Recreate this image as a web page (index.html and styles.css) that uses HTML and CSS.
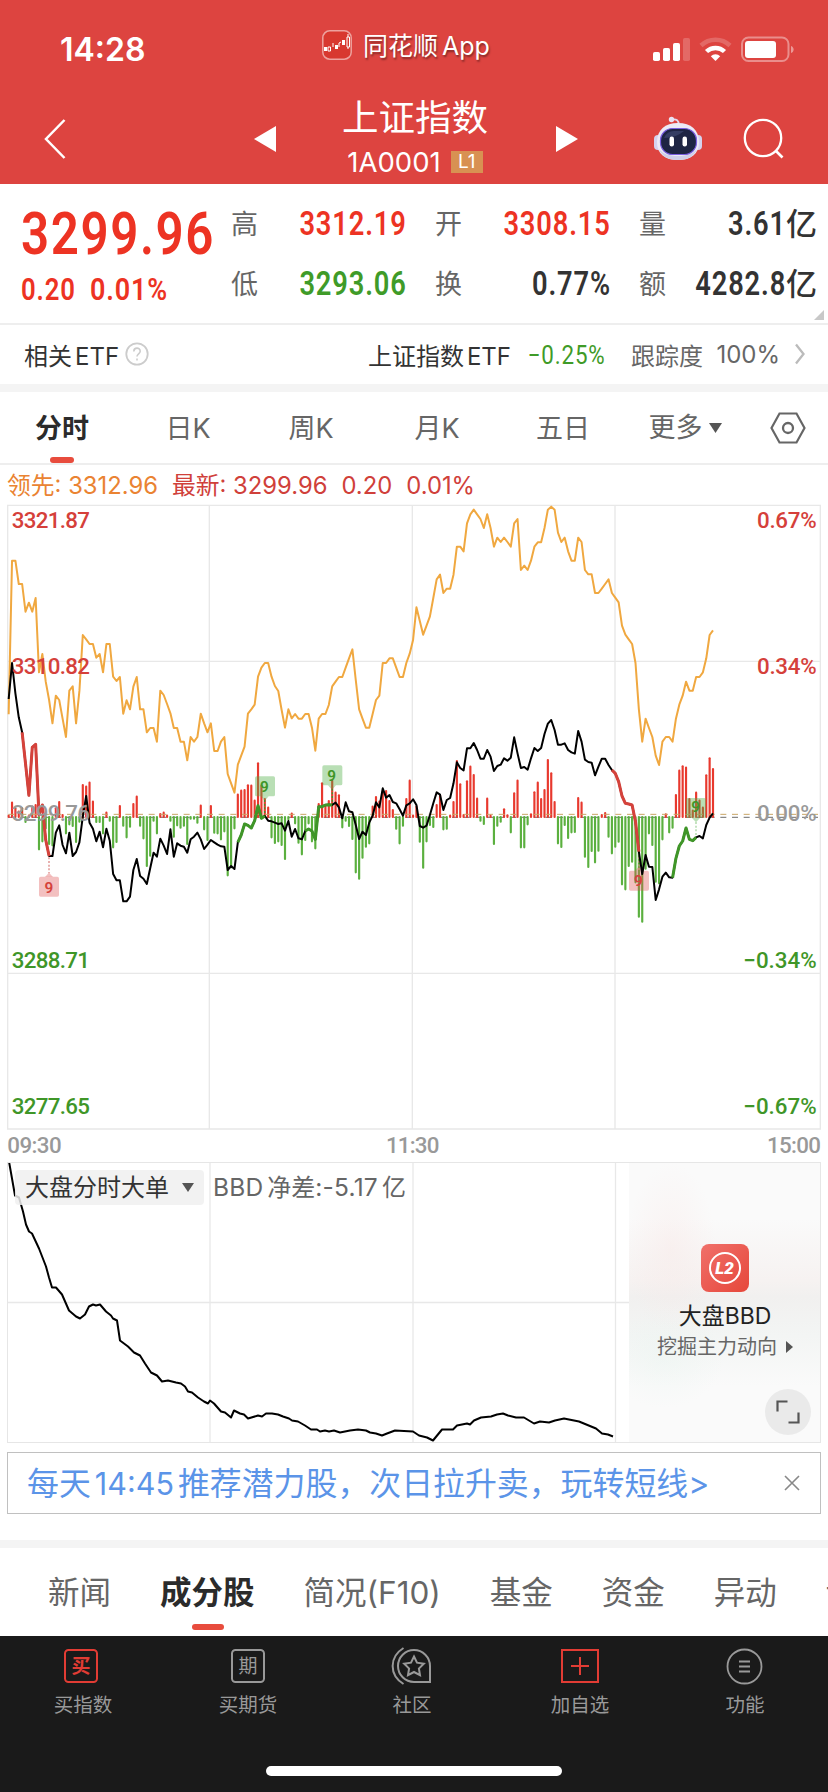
FILE: index.html
```html
<!DOCTYPE html>
<html lang="zh-CN">
<head>
  <meta charset="UTF-8" />
  <title>上证指数</title>
  <link rel="stylesheet" href="styles.css">
</head>
<body>

  <header class="header">
    <div class="status-bar">
      <span class="clock">14:28</span>
      <div class="app-mark">
        <svg width="30" height="30" viewBox="0 0 30 30">
          <rect x="0.8" y="0.8" width="28.4" height="28.4" rx="7" fill="#d8382f" stroke="#eda29e" stroke-width="1.5"/>
          <path d="M2 17h3v4H2zM13 15h3v4h-3zM20 10h3v5h-3z" fill="#fff"/>
          <path d="M6 17h2.500v4H6zM25 7h2.500v10h-2.500zM11 13v4M17 17v-4l2-1M26 4v3M26 17v2" fill="none" stroke="#fff"/>
        </svg>
        <span>同花顺<i>App</i></span>
      </div>
      <svg class="status-icons" width="144" height="28" viewBox="0 0 144 28">
        <g fill="#fff">
          <rect x="0" y="16" width="7" height="9" rx="1.800"/>
          <rect x="10" y="12" width="7" height="13" rx="1.800"/>
          <rect x="20" y="7" width="7" height="18" rx="1.800"/>
          <rect x="30" y="2" width="7" height="23" rx="1.800" opacity="0.2"/>
          <path d="M62.500 25l-4.700-4.800a6.800 6.800 0 0 1 9.400 0z"/>
          <rect x="92" y="5" width="31" height="17" rx="3"/>
          <path d="M138 10c3.500 1 3.500 6 0 7z" opacity="0.45"/>
        </g>
        <path d="M53.500 15.500a13 13 0 0 1 18 0" fill="none" stroke="#fff" stroke-width="4.500"/>
        <path d="M48 9.500a21 21 0 0 1 29 0" fill="none" stroke="#fff" stroke-width="4.500" opacity="0.2"/>
        <rect x="89" y="1.500" width="46.500" height="23.500" rx="6.500" fill="none" stroke="#fff" stroke-width="2" opacity="0.4"/>
      </svg>
    </div>

    <div class="title-bar">
      <svg class="back" width="24" height="42" viewBox="0 0 24 42"><path d="M21.500 2L3 21l18.500 19" fill="none" stroke="#fff" stroke-width="2.500"/></svg>
      <svg class="prev" width="22" height="26" viewBox="0 0 22 26"><path d="M22 0v26L0 13z" fill="#fff"/></svg>
      <div class="title">
        <h1>上证指数</h1>
        <div class="code"><span>1A0001</span><b>L1</b></div>
      </div>
      <svg class="next" width="22" height="26" viewBox="0 0 22 26"><path d="M0 0v26L22 13z" fill="#fff"/></svg>
      <svg class="robot" width="48" height="45" viewBox="0 0 48 45">
        <path d="M18 3.500q7-1 6.500 5" fill="none" stroke="#e3d9ee" stroke-width="1.800"/>
        <circle cx="17.500" cy="3.500" r="2.700" fill="#e9e2f2"/>
        <rect x="0" y="19" width="8" height="15" rx="4" fill="#d5d2ee"/>
        <rect x="40" y="19" width="8" height="15" rx="4" fill="#d5d2ee"/>
        <path d="M24 7C11 7 3 14 3 26s8 18 21 18 21-6 21-18S37 7 24 7z" fill="#eceaf6"/>
        <path d="M5 33c3 8 10 11 19 11s16-3 19-11c-4 5-10 7-19 7s-15-2-19-7z" fill="#cfcfe9"/>
        <rect x="6.500" y="12.500" width="36" height="26" rx="12" fill="#1e2544" stroke="#7a5fe0" stroke-width="1.200"/>
        <path d="M10 22q3-7 10-7h10q-8 7-20 7z" fill="#343d63"/>
        <rect x="15.500" y="20.500" width="4.500" height="10" rx="2.200" fill="#fff"/>
        <rect x="28.500" y="20.500" width="4.500" height="10" rx="2.200" fill="#fff"/>
      </svg>
      <svg class="search" width="42" height="42" viewBox="0 0 42 42"><circle cx="20" cy="20" r="18.200" fill="none" stroke="#fff" stroke-width="2.300"/><path d="M32.500 32.500l7 7" stroke="#fff" stroke-width="2.700"/></svg>
    </div>
  </header>

  <section class="quote">
    <div class="price">
      <div class="last"><span class="num">3299.96</span></div>
      <div class="change"><span class="num">0.20</span><span class="num">0.01%</span></div>
    </div>
    <div class="stats">
      <span class="key">高</span><span class="val up"><span class="num">3312.19</span></span>
      <span class="key">开</span><span class="val up"><span class="num">3308.15</span></span>
      <span class="key">量</span><span class="val with-unit"><span class="num">3.61</span>亿</span>
      <span class="key">低</span><span class="val down"><span class="num">3293.06</span></span>
      <span class="key">换</span><span class="val"><span class="num">0.77%</span></span>
      <span class="key">额</span><span class="val with-unit"><span class="num">4282.8</span>亿</span>
    </div>
    <div class="corner"></div>
  </section>

  <section class="etf">
    <span>相关<i>ETF</i></span>
    <svg class="help" width="24" height="24" viewBox="0 0 24 24">
      <circle cx="12" cy="12" r="10.700" fill="none" stroke="#ccc" stroke-width="1.800"/>
      <path d="M8.800 9.500c0-4.500 6.400-4.300 6.400-.3 0 2.500-3.200 2.800-3.200 5.300M12 16.500v2" fill="none" stroke="#ccc" stroke-width="1.600"/>
    </svg>
    <span class="etf-name">上证指数<i>ETF</i></span>
    <span class="etf-change"><span class="num">−0.25%</span></span>
    <span class="track">跟踪度</span>
    <span class="track-val">100%</span>
    <svg width="12" height="22" viewBox="0 0 12 22"><path d="M2 1.500l7.500 9.500L2 20.500" fill="none" stroke="#bbb" stroke-width="2.300"/></svg>
  </section>

  <nav class="periods">
    <span class="active">分时</span>
    <span>日K</span>
    <span>周K</span>
    <span>月K</span>
    <span>五日</span>
    <span class="more">更多<svg width="13" height="10" viewBox="0 0 13 10"><path d="M0 0h13L6.500 10z" fill="#555"/></svg></span>
    <span class="gear"><svg width="36" height="32" viewBox="0 0 36 32"><path d="M9.500 1.500h17L34.500 16l-8 14.500h-17L1.500 16z" fill="none" stroke="#666" stroke-width="2.200"/><circle cx="18" cy="16" r="5" fill="none" stroke="#666" stroke-width="2.300"/></svg></span>
  </nav>

  <div class="legend">
    <span class="lead">领先: 3312.96</span>
    <span>最新: 3299.96</span>
    <span>0.20</span>
    <span>0.01%</span>
  </div>

  <!-- plot units are thirds of a pixel -->
  <svg class="chart" id="minute-chart" viewBox="0 0 2484 1986">
    <g class="grid">
      <path d="M23 16H2461V1887H23zM23 484H2461M23 1420H2461M628 16V1887M1237 16V1887M1845 16V1887"/>
    </g>
    <path class="zero-line" d="M26 952H2454"/>
    <g id="bars"></g>
    <path class="avg-line" d="M26 943H2454"/>
    <g class="marks">
      <rect class="m-red" x="117" y="1130" width="60" height="60" rx="5"/><path class="m-red" d="M135 1131l12-13 12 13z"/>
      <rect class="m-green" x="765" y="829" width="60" height="60" rx="5"/><path class="m-green" d="M782 889l12 13 12-13z"/>
      <rect class="m-green" x="967" y="796" width="60" height="60" rx="5"/><path class="m-green" d="M984 856l12 13 12-13z"/>
      <rect class="m-red" x="1887" y="1112" width="60" height="60" rx="5"/><path class="m-red" d="M1905 1112l12-13 12 13z"/>
      <rect class="m-green" x="2058" y="894" width="60" height="60" rx="5"/><path class="m-green" d="M2076 954l12 13 12-13z"/>
      <path class="dots red" d="M147 1072V1120M1917 1060V1112"/>
      <path class="dots green" d="M794 900V948M997 866V912"/>
      <path class="dots pale" d="M2088 966V1008"/>
      <g class="nine red"><text x="147" y="1178">9</text><text x="1915" y="1158">9</text></g>
      <g class="nine green"><text x="793" y="877">9</text><text x="995" y="842">9</text><text x="2087" y="936">9</text></g>
    </g>
    <g id="lines"></g>
    <g class="scale">
      <text class="up" x="35" y="83" textLength="235">3321.87</text>
      <text class="up" x="35" y="523" textLength="235">3310.82</text>
      <text class="flat" x="35" y="963" textLength="235">3299.76</text>
      <text class="down" x="35" y="1403" textLength="235">3288.71</text>
      <text class="down" x="35" y="1843" textLength="235">3277.65</text>
      <text class="up" x="2271" y="83" textLength="179">0.67%</text>
      <text class="up" x="2271" y="523" textLength="179">0.34%</text>
      <text class="flat" x="2271" y="963" textLength="179">0.00%</text>
      <text class="down" x="2230" y="1403" textLength="220">−0.34%</text>
      <text class="down" x="2230" y="1843" textLength="220">−0.67%</text>
      <text class="time" x="22" y="1958" textLength="163">09:30</text>
      <text class="time" x="1158" y="1958" textLength="160">11:30</text>
      <text class="time" x="2301" y="1958" textLength="162">15:00</text>
    </g>
  </svg>

  <section class="bbd">
    <div class="bbd-plot">
      <svg width="622" height="279" viewBox="0 0 622 279">
        <path class="bbd-grid" d="M0 139.500H622M202 0V280M405 0V280M607.500 0V280"/>
        <polyline id="bbd-line" fill="none" stroke="#000" stroke-width="2" stroke-linejoin="round"/>
      </svg>
      <div class="bbd-label">
        <span class="pill">大盘分时大单<svg width="12" height="9" viewBox="0 0 12 9"><path d="M0 0h12L6 9z" fill="#555"/></svg></span>
        <span class="bbd-val"><i>BBD</i>净差<i>:-5.17</i>亿</span>
      </div>
    </div>
    <div class="bbd-card">
      <svg width="48" height="48" viewBox="0 0 48 48">
        <defs><linearGradient id="l2" x1="0" y1="0" x2="1" y2="1"><stop offset="0" stop-color="#f0706a"/><stop offset="1" stop-color="#e6473a"/></linearGradient></defs>
        <rect width="48" height="48" rx="8" fill="url(#l2)"/>
        <circle cx="24" cy="24" r="15" fill="none" stroke="#fff" stroke-width="2"/>
        <text x="23.500" y="30" class="l2-text">L2</text>
      </svg>
      <div class="card-name">大盘<i>BBD</i></div>
      <div class="card-sub">挖掘主力动向<svg width="7" height="12" viewBox="0 0 7 12"><path d="M0 0l7 6-7 6z" fill="#555"/></svg></div>
      <div class="expand"><svg width="26" height="26" viewBox="0 0 26 26"><path d="M2.500 12.500v-10h10M23.500 13.500v10h-10" fill="none" stroke="#555" stroke-width="2.200"/></svg></div>
    </div>
  </section>

  <div class="ad">
    <span>每天<i>14:45</i>推荐潜力股，次日拉升卖，玩转短线&gt;</span>
    <svg width="16" height="16" viewBox="0 0 16 16"><path d="M1 1l14 14M15 1L1 15" stroke="#888" stroke-width="1.600"/></svg>
  </div>

  <nav class="info-tabs">
    <span>新闻</span>
    <span class="active">成分股</span>
    <span>简况<i>(F10)</i></span>
    <span>基金</span>
    <span>资金</span>
    <span>异动</span>
    <span>讨论</span>
  </nav>

  <footer class="toolbar">
    <div class="tool">
      <svg width="44" height="40" viewBox="0 0 44 40"><rect x="4" y="3" width="32" height="32" rx="3.500" fill="none" stroke="#e23c34" stroke-width="2"/><text x="20" y="26" class="box-text red">买</text></svg>
      <span>买指数</span>
    </div>
    <div class="tool">
      <svg width="44" height="40" viewBox="0 0 44 40"><rect x="6" y="3" width="32" height="32" rx="3.500" fill="none" stroke="#999" stroke-width="2"/><text x="22" y="26" class="box-text">期</text></svg>
      <span>买期货</span>
    </div>
    <div class="tool">
      <svg width="44" height="40" viewBox="0 0 44 40" fill="none" stroke="#999" stroke-width="2">
        <path d="M24 3a16 16 0 0 0 0 32h16V19A16 16 0 0 0 24 3z"/>
        <path d="M13.500 1C-1 10-1 28 13.500 37"/>
        <path d="M24 9.500l3 6.200 6.800 1-4.900 4.800 1.100 6.700-6-3.200-6 3.200 1.100-6.700-4.900-4.800 6.800-1z"/>
      </svg>
      <span>社区</span>
    </div>
    <div class="tool">
      <svg width="44" height="40" viewBox="0 0 44 40" fill="none" stroke="#e23c34" stroke-width="2"><rect x="4" y="3" width="36" height="32"/><path d="M13 19h18M22 10v18"/></svg>
      <span>加自选</span>
    </div>
    <div class="tool">
      <svg width="44" height="40" viewBox="0 0 44 40" fill="none" stroke="#999" stroke-width="1.800"><circle cx="21.500" cy="19.500" r="17"/><path d="M16 14.500h11M16 19.500h11M16 24.500h11" stroke-width="2"/></svg>
      <span>功能</span>
    </div>
    <div class="home-bar"></div>
  </footer>

  <script src="chart.js"></script>
</body>
</html>
```
FILE: styles.css
```css
* {
  box-sizing: border-box;
  margin: 0;
  padding: 0;
}

body {
  width: 828px;
  height: 1792px;
  overflow: hidden;
  background: #fff;
  color: #333;
  font-family: Inter, "Noto Sans CJK SC", sans-serif;
}

svg {
  display: block;
  flex: none;
}

i {
  font-style: normal;
}

span {
  white-space: nowrap;
}

.num {
  display: inline-block;
  font-family: Roboto, "Noto Sans CJK SC", sans-serif;
  font-weight: 600;
  letter-spacing: 1px;
  transform: scaleX(0.83);
  transform-origin: right center;
}

.up { color: #ed3323; }
.down { color: #3f9b28; }

/* Header */
.header {
  height: 184px;
  background: #dd4440;
  color: #fff;
}

.status-bar {
  display: flex;
  height: 92px;
  padding: 30px 30px 0 60px;
}

.clock {
  width: 262px;
  font-size: 32px;
  font-weight: 600;
  line-height: 40px;
}

.app-mark {
  display: flex;
  width: 331px;
  height: 30px;
}

.app-mark span {
  margin-left: 11px;
  font-size: 25px;
  line-height: 32px;
  text-shadow: 1px 2px 2px rgba(0, 0, 0, 0.4);
}

.app-mark i {
  margin-left: 4px;
}

.status-icons {
  margin-top: 6px;
}

.title-bar {
  display: flex;
  padding-left: 43px;
}

.back { margin-top: 26px; }
.prev { margin: 34px 0 0 187px; }

.title {
  width: 280px;
  padding-right: 2px;
  text-align: center;
}

.title h1 {
  font-size: 36.500px;
  font-weight: 400;
  line-height: 52px;
}

.code {
  display: flex;
  justify-content: center;
  align-items: center;
  height: 36px;
  font-size: 27.500px;
}

.code b {
  width: 32px;
  height: 22px;
  margin-left: 10px;
  background: #d89152;
  font-size: 19px;
  font-weight: 400;
  line-height: 22px;
}

.next { margin: 34px 0 0 0; }
.robot { margin: 24px 0 0 76px; }
.search { margin: 26px 0 0 41px; }

/* Price block */
.quote {
  position: relative;
  display: flex;
  height: 141px;
  padding: 10px 11px 0 21px;
  border-bottom: 2px solid #eee;
}

.price {
  width: 210px;
  color: #ed3323;
}

.price .num {
  transform-origin: left center;
}

.last {
  height: 78px;
  font-size: 60px;
  line-height: 77px;
}

.last .num {
  letter-spacing: 2px;
  transform: scaleX(0.82);
}

.change {
  display: flex;
  margin-top: -1px;
  font-size: 31px;
  line-height: 37px;
}

.change .num:first-child {
  width: 69px;
}

.change .num:last-child {
  transform: scaleX(0.87);
}

.stats {
  flex: 1;
  display: grid;
  grid-template-columns: 30px 146px 58px 146px 58px 148px;
  grid-template-rows: 60px 60px;
  align-items: center;
}

.key {
  padding-bottom: 3px;
  font-size: 27px;
  color: #666;
}

.val + .key {
  padding-left: 28px;
}

.stats .key:nth-child(7) {
  padding-left: 0;
}

.val {
  text-align: right;
  font-size: 31px;
  font-weight: 500;
}

.val .num {
  font-size: 32.500px;
  transform: scaleX(0.84);
}

.with-unit {
  padding-bottom: 5px;
}

.corner {
  position: absolute;
  right: 4px;
  bottom: 3px;
  border-left: 10px solid transparent;
  border-bottom: 10px solid #c8c8c8;
}

.etf {
  display: flex;
  align-items: center;
  height: 67px;
  padding: 0 22px 1px 24px;
  border-bottom: 8px solid #f4f4f4;
  font-size: 24px;
}

.etf i {
  margin-left: 3px;
  font-size: 24px;
}

.help { margin-left: 6px; }
.etf-name { margin-left: auto; }

.etf-change {
  width: 95px;
  text-align: right;
  color: #3f9b28;
  font-size: 26px;
}

.etf-change .num {
  font-weight: 400;
  transform: scaleX(0.86);
}

.track {
  margin-left: 25px;
  color: #666;
}

.track-val {
  width: 77px;
  margin-right: 14px;
  text-align: right;
  color: #666;
  font-size: 24px;
}

/* Period tabs */
.periods {
  display: grid;
  grid-template-columns: 124px 128px 118px 134px 118px 126px 80px;
  height: 73px;
  border-bottom: 2px solid #eee;
  color: #666;
  font-size: 27px;
  line-height: 73px;
}

.periods span {
  height: 71px;
  text-align: center;
}

.periods .active,
.info-tabs .active {
  position: relative;
  color: #2b2b2b;
  font-weight: 700;
}

.periods .active::after,
.info-tabs .active::after {
  content: "";
  position: absolute;
  left: 50px;
  bottom: 0;
  width: 24px;
  height: 6px;
  border-radius: 3px;
  background: #e84c3d;
}

.periods .more {
  display: flex;
  justify-content: center;
  align-items: center;
  gap: 6px;
}

.gear {
  display: flex;
  justify-content: center;
  align-items: center;
}

.legend {
  display: flex;
  height: 35px;
  padding: 3px 0 0 7px;
  gap: 14px;
  color: #d0403a;
  font-size: 23.800px;
  line-height: 35px;
}

.lead {
  color: #ea8332;
}

/* Minute chart */
.chart {
  width: 828px;
  height: 662px;
}

.grid path {
  fill: none;
  stroke: #e8e8e8;
  stroke-width: 4;
}

.zero-line {
  stroke: #888;
  stroke-width: 4;
  stroke-dasharray: 18 17;
}

.avg-line {
  stroke: #c9a565;
  stroke-width: 3;
  stroke-dasharray: 18 17;
}

.bar {
  stroke-width: 6.500;
  stroke-linecap: round;
}

.bar-up { stroke: #e8392e; }
.bar-down { stroke: #5bb03f; }

.line {
  fill: none;
  stroke-linejoin: round;
}

.line-lead {
  stroke: #f0a840;
  stroke-width: 6;
}

.line-index {
  stroke: #000;
  stroke-width: 6;
}

.line-red {
  stroke: #d5423b;
  stroke-width: 9;
}

.line-green {
  stroke: #3f9628;
  stroke-width: 9;
}

.m-red { fill: rgba(222, 80, 80, 0.36); }
.m-green { fill: rgba(80, 175, 70, 0.4); }

.dots {
  stroke-width: 4;
  stroke-dasharray: 6 5;
}

.dots.red { stroke: #dd8a88; }
.dots.green { stroke: #3f9628; }
.dots.pale { stroke: #a9d6a2; }

.nine {
  font-family: Roboto, sans-serif;
  font-size: 46px;
  font-weight: 600;
  text-anchor: middle;
}

.nine.red { fill: #d5423b; }
.nine.green { fill: #3f9628; }

.scale text {
  font-family: Roboto, sans-serif;
  font-size: 67px;
  font-weight: 500;
}

.scale .up { fill: #d5403a; }
.scale .down { fill: #3f9628; }
.scale .flat { fill: #999; }
.scale .time { fill: #999; }

/* Big order chart */
.bbd {
  display: flex;
  width: 814px;
  height: 281px;
  margin-left: 7px;
  border: 1px solid #e6e6e6;
}

.bbd-plot {
  position: relative;
  width: 621px;
  height: 279px;
}

.bbd-grid {
  stroke: #e8e8e8;
  stroke-width: 1.300;
}

/* the caption floats over the curve */
.bbd-label {
  position: absolute;
  left: 7px;
  top: 7px;
  display: flex;
  line-height: 35px;
  font-size: 24px;
}

.pill {
  display: flex;
  align-items: center;
  gap: 13px;
  width: 189px;
  height: 35px;
  padding-left: 10px;
  border-radius: 4px;
  background: rgba(240, 240, 240, 0.85);
}

.bbd-val {
  margin-left: 9px;
  color: #666;
}

.bbd-val i {
  margin-right: 4px;
  font-size: 24.500px;
  letter-spacing: 0.2px;
}

.bbd-card {
  position: relative;
  flex: 1;
  display: flex;
  flex-direction: column;
  align-items: center;
  padding: 81px 0 0 1px;
  background:
    radial-gradient(ellipse 45px 85px at 42px 85px, rgba(248, 228, 226, 0.35), transparent),
    radial-gradient(ellipse 60px 50px at 35px 195px, rgba(226, 242, 235, 0.3), transparent),
    linear-gradient(#fafafa 20%, #f6f2f1 42%, #f1f0ef 48%, #f3f5f4 62%, #fafafa 80%);
}

.l2-text {
  fill: #fff;
  font-family: Roboto, sans-serif;
  font-size: 17px;
  font-weight: 900;
  font-style: italic;
  text-anchor: middle;
}

.card-name {
  margin-top: 7px;
  font-size: 23px;
  line-height: 34px;
  color: #222;
}

.card-sub {
  display: flex;
  align-items: center;
  gap: 9px;
  font-size: 20px;
  line-height: 28px;
  color: #666;
}

.expand {
  position: absolute;
  right: 9px;
  bottom: 7px;
  display: flex;
  justify-content: center;
  align-items: center;
  width: 46px;
  height: 46px;
  border-radius: 50%;
  background: #eaeaea;
}

.ad {
  display: flex;
  justify-content: space-between;
  align-items: center;
  width: 814px;
  height: 62px;
  margin: 9px 0 26px 7px;
  padding: 0 20px 0 19px;
  border: 1.500px solid #c0c0c0;
  color: #5b94e8;
  font-size: 31.900px;
}

.ad span {
  padding-bottom: 5px;
}

.ad i {
  margin: 0 4px;
  font-size: 30.500px;
}

.info-tabs {
  display: flex;
  gap: 49px;
  height: 96px;
  padding-left: 48px;
  border-top: 8px solid #f4f4f4;
  overflow: hidden;
  color: #666;
  font-size: 31.500px;
  line-height: 90px;
}

.info-tabs .active::after {
  left: 32px;
  bottom: 6px;
  width: 32px;
}

/* Bottom toolbar */
.toolbar {
  display: grid;
  grid-template-columns: 166px 164px 164px 172px 158px;
  align-content: start;
  height: 156px;
  padding-top: 11px;
  background: #1a1a1a;
}

.tool {
  display: flex;
  flex-direction: column;
  align-items: center;
  color: #999;
  font-size: 19.500px;
  line-height: 36px;
}

.box-text {
  fill: #999;
  font-family: "Noto Sans CJK SC", sans-serif;
  font-size: 19px;
  text-anchor: middle;
}

.box-text.red {
  fill: #e23c34;
  font-weight: 700;
}

.home-bar {
  grid-column: 1 / -1;
  justify-self: center;
  width: 296px;
  height: 10px;
  margin: 43px 0 0 4px;
  border-radius: 5px;
  background: #fff;
}
```
FILE: chart.js
```js
const X0 = 26;
const STEP = 10.11;
const BASE = 951;

const lead = [643,182,182,252,252,335,308,335,294,517,462,545,600,670,587,600,656,711,572,559,
  670,572,405,418,432,432,473,462,517,432,432,530,543,531,641,601,628,560,531,628,
  628,697,684,684,725,572,585,612,640,684,684,725,725,781,711,725,711,641,670,697,
  670,753,753,725,711,822,850,878,794,767,740,641,628,614,530,503,489,489,530,558,
  573,630,683,628,655,642,656,656,642,642,683,752,656,642,642,615,559,545,531,531,
  503,475,448,540,628,656,683,683,642,600,587,489,489,475,475,503,531,531,489,461,
  420,322,363,404,377,349,294,238,224,279,266,266,224,140,140,154,70,43,29,43,
  57,84,43,84,140,113,126,113,126,140,70,57,210,197,210,182,140,127,127,84,
  29,20,29,98,126,113,154,182,182,113,126,210,223,223,279,279,266,252,238,279,
  293,307,377,404,418,432,489,628,725,656,684,711,767,795,725,711,711,725,656,614,
  587,545,572,572,531,531,517,475,405,391];

const index = [597,489,580,652,697,790,886,742,733,945,915,1020,1068,1068,998,976,1035,1060,998,1068,
  1056,1027,950,888,968,986,1024,995,1042,986,1022,1122,1141,1141,1204,1204,1190,1110,1077,1128,
  1136,1152,1105,1058,1070,1016,1037,1062,988,1070,1030,1037,1040,1058,1018,1010,998,1018,1047,1034,
  1020,1027,1034,1039,1040,1110,1098,1107,1027,1005,972,976,984,962,917,955,948,962,964,968,
  972,970,992,963,1010,987,1015,1018,993,987,993,1018,920,920,915,914,915,908,922,955,
  907,934,937,975,1017,995,1005,968,947,907,922,865,893,885,906,910,928,947,916,910,
  898,915,978,983,977,945,910,877,884,930,900,894,850,787,804,811,745,745,729,750,
  776,776,750,770,813,798,794,775,782,773,712,760,804,801,809,775,744,753,744,702,
  671,660,690,734,734,730,750,757,761,693,725,779,786,788,826,800,776,776,795,810,
  820,845,888,910,912,915,965,1055,1122,1065,1100,1101,1200,1168,1130,1118,1132,1133,1075,1038,
  1023,984,1018,1022,1012,1008,1015,975,953,940];

const bars = [947,908,925,935,925,966,947,920,915,1048,1024,985,1032,1036,925,906,945,1000,973,978,
  1026,965,855,860,848,905,966,966,1000,938,962,1042,1026,918,977,1012,980,912,890,977,
  1015,1098,1067,962,1000,942,938,947,962,1010,976,983,977,1032,956,956,968,917,988,1020,
  918,998,1000,1018,994,1126,1102,985,884,872,870,856,857,902,790,857,897,923,1012,1029,
  1024,1035,1077,958,941,970,1028,1063,1020,970,1024,1045,912,850,915,903,842,878,886,982,
  962,978,1017,1117,1136,1073,1040,1030,920,891,905,875,873,903,930,986,1030,977,897,842,
  947,920,1025,1103,1024,975,981,915,885,988,986,947,906,783,853,945,844,800,825,896,
  962,972,896,947,1032,977,965,928,946,997,880,842,1042,1042,973,943,877,848,897,870,
  780,820,906,1030,1041,975,1014,997,996,894,908,1070,1101,1053,1087,1052,945,939,1010,1060,
  1040,1025,1153,1168,1098,1085,1147,1250,1265,1106,1000,1035,1145,1150,1018,943,997,983,885,812,
  799,803,897,932,878,902,923,826,775,807];

const bbd = [[1,3],[7,37],[11,39],[15,53],[18,66],[21,73],[24,75],[31,90],[38,108],[41,119],[44,129],[48,129],[54,136],[61,152],[68,158],
  [72,160],[77,156],[81,148],[85,146],[88,147],[92,146],[98,153],[103,157],[105,160],[109,162],[112,182],[120,188],[126,194],[132,197],[137,205],
  [143,214],[149,217],[154,223],[160,222],[168,224],[173,225],[177,228],[180,233],[184,234],[190,239],[196,243],[200,245],[202,242],[206,245],[213,253],
  [217,254],[223,259],[226,252],[232,255],[236,256],[240,260],[250,257],[254,258],[258,255],[264,255],[270,256],[275,258],[281,260],[284,262],[290,263],
  [297,267],[303,271],[309,271],[312,273],[317,272],[321,273],[326,272],[332,274],[342,272],[350,271],[358,272],[362,274],[368,275],[374,277],[379,275],
  [387,272],[405,273],[411,277],[419,279],[425,282],[434,271],[445,271],[449,267],[459,265],[462,266],[466,262],[473,259],[483,258],[489,256],[495,255],
  [500,257],[508,259],[516,259],[526,265],[532,263],[541,264],[547,262],[556,260],[571,263],[588,270],[594,275],[600,276],[605,278]];

const NS = 'http://www.w3.org/2000/svg';

function px(i) {
  return (X0 + i * STEP).toFixed(1);
}

function drawLine(data, from, to, cls) {
  const line = document.createElementNS(NS, 'polyline');
  const points = [];
  for (let i = from; i <= to; i++) {
    points.push(px(i) + ',' + data[i]);
  }
  line.setAttribute('points', points.join(' '));
  line.setAttribute('class', 'line ' + cls);
  document.getElementById('lines').appendChild(line);
}

bars.forEach((y, i) => {
  const bar = document.createElementNS(NS, 'line');
  bar.setAttribute('x1', px(i));
  bar.setAttribute('x2', px(i));
  bar.setAttribute('y1', BASE);
  bar.setAttribute('y2', y);
  bar.setAttribute('class', 'bar ' + (y < BASE ? 'bar-up' : 'bar-down'));
  document.getElementById('bars').appendChild(bar);
});

drawLine(lead, 0, lead.length - 1, 'line-lead');
drawLine(index, 0, index.length - 1, 'line-index');
drawLine(index, 4, 12, 'line-red');
drawLine(index, 179, 187, 'line-red');
drawLine(index, 68, 76, 'line-green');
drawLine(index, 88, 96, 'line-green');
drawLine(index, 197, 204, 'line-green');

document.getElementById('bbd-line').setAttribute('points', bbd.map(p => p[0] + ',' + (p[1] - 4.5)).join(' '));
```
